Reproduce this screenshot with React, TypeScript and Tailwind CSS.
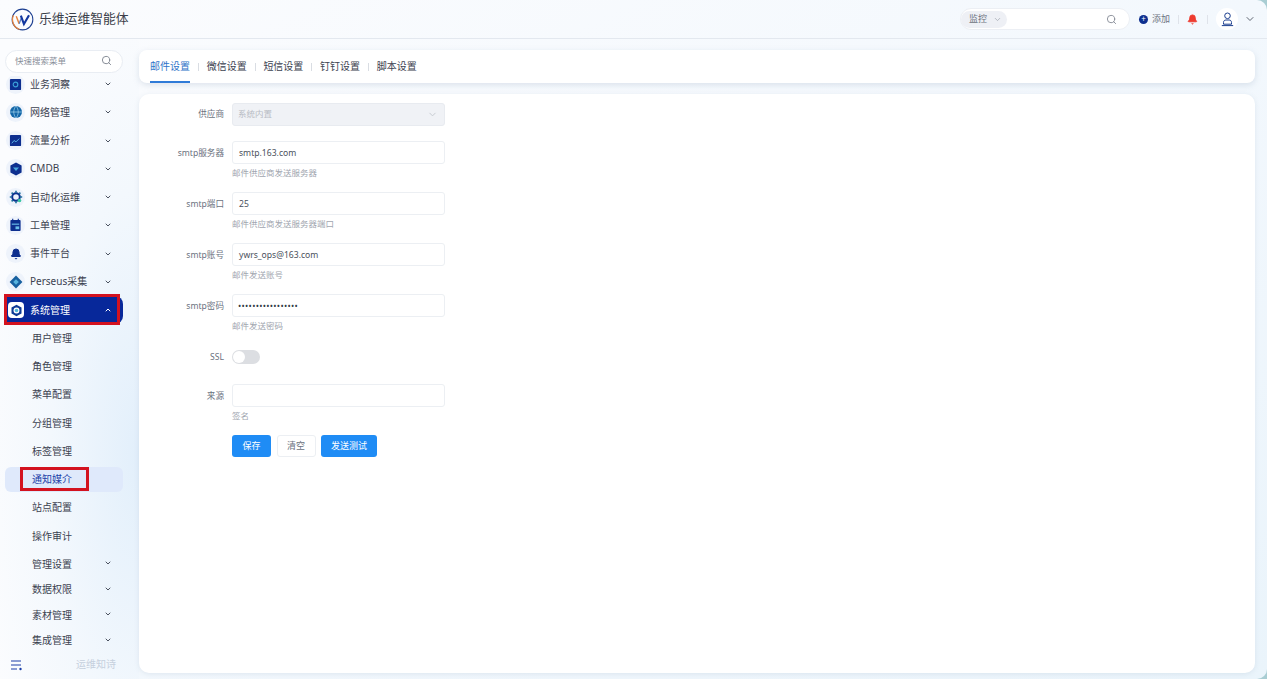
import { ChevronDown, ChevronUp, Search, Bell } from "lucide-react";

const FONT = "font-['Noto_Sans','Noto_Sans_CJK_SC',sans-serif]";

function Logo() {
  return (
    <svg width="23" height="23" viewBox="0 0 24 24" fill="none">
      <circle cx="12" cy="12" r="10.8" stroke="#1d3f91" strokeWidth="1.1" />
      <path d="M2.6 7.500A10.800 10.800 0 0 0 9 22.300" stroke="#e8823a" strokeWidth="1.300" />
      <path d="M5.500 8.500L8.500 16.500" stroke="#e8823a" strokeWidth="1.500" />
      <path d="M8.500 16.500L11 10" stroke="#5b80c4" strokeWidth="1.300" />
      <path d="M10.300 8L13.500 16.800L18.800 7.500" stroke="#12379f" strokeWidth="2.200" />
    </svg>
  );
}

function MenuIcon({ name }: { name: string }) {
  const navy = "#0d2f8f";
  if (name === "insight" || name === "flow")
    return (
      <svg width="13" height="13" viewBox="0 0 14 14">
        <rect x="1" y="1" width="12" height="12" rx="1" fill={navy} />
        {name === "insight" ? (
          <circle cx="7" cy="7" r="2.500" fill="none" stroke="#3aa0d8" strokeWidth="1.200" />
        ) : (
          <path d="M3 10l2.500-3 2 1.500L11 5" fill="none" stroke="#5ab4e6" strokeWidth="1" />
        )}
      </svg>
    );
  if (name === "net")
    return (
      <svg width="14" height="14" viewBox="0 0 14 14" fill="none">
        <circle cx="7" cy="7" r="6" fill="#1467a8" />
        <path d="M1 7h12M7 1c-3 3.500-3 8.500 0 12M7 1c3 3.500 3 8.500 0 12" stroke="#a5d4ee" strokeWidth=".7" />
      </svg>
    );
  if (name === "cmdb")
    return (
      <svg width="14" height="14" viewBox="0 0 14 14">
        <path d="M7 .6l5.600 3v6.800L7 13.400l-5.600-3V3.600z" fill={navy} />
        <path d="M4 5.500h6L7 9z" fill="#4aa8dc" />
      </svg>
    );
  if (name === "auto")
    return (
      <svg width="14" height="14" viewBox="0 0 14 14" fill="none">
        <circle cx="7" cy="7" r="3.800" stroke={navy} strokeWidth="2" />
        <path d="M7 .8v2M7 11.200v2M.8 7h2M11.200 7h2M2.600 2.600l1.400 1.400M10 10l1.400 1.400M2.600 11.400L4 10M10 4l1.400-1.400" stroke="#1b6f9c" strokeWidth="1.600" />
        <circle cx="10.500" cy="10.500" r="1.800" fill="#38c9a0" />
      </svg>
    );
  if (name === "ticket")
    return (
      <svg width="13" height="14" viewBox="0 0 14 15">
        <rect x="1.500" y="2" width="11" height="12" rx="1" fill={navy} />
        <path d="M4 .8v2.500M10 .8v2.500" stroke={navy} strokeWidth="1.200" />
        <rect x="3" y="6" width="8" height="1.200" fill="#6cc0ea" />
        <rect x="7" y="9" width="4" height="3" fill="#6cc0ea" />
      </svg>
    );
  if (name === "event") return <Bell size={12} fill={navy} stroke={navy} />;
  return (
    <svg width="14" height="14" viewBox="0 0 14 14">
      <path d="M7 .6L13.400 7 7 13.400.6 7z" fill="#17609f" />
      <path d="M7 4.200L9.800 7 7 9.800 4.200 7z" fill="#57b3de" />
    </svg>
  );
}

function TopItem({ name, label }: { name: string; label: string }) {
  return (
    <div className="flex h-[28.250px] shrink-0 items-center pl-[6px] pr-[27px]">
      <span className="flex h-[19px] w-[19px] items-center justify-center rounded-full bg-[#eef3fb]">
        <MenuIcon name={name} />
      </span>
      <span className="ml-[5px] flex-1 text-[10px] text-[#3c4250]">{label}</span>
      <ChevronDown size={8} strokeWidth={3} className="text-[#4b5260]" />
    </div>
  );
}

function SubItem({ label, arrow = false, tall = true }: { label: string; arrow?: boolean; tall?: boolean }) {
  return (
    <div className={`flex shrink-0 items-center pl-[32px] pr-[27px] ${tall ? "h-[28.250px]" : "h-[25.500px]"}`}>
      <span className="flex-1 text-[10px] text-[#3c4250]">{label}</span>
      {arrow && <ChevronDown size={8} strokeWidth={3} className="-mt-[2px] text-[#4b5260]" />}
    </div>
  );
}

function Sidebar() {
  return (
    <aside className="flex h-full w-[139px] shrink-0 flex-col bg-[radial-gradient(ellipse_at_100%_65%,#e2effb_0%,#f3f8fd_45%,#fbfcfe_80%)]">
      <div className="ml-[5px] mt-[11px] flex h-[23px] w-[118px] items-center justify-between rounded-full border border-[#e9edf3] bg-white pl-[9px] pr-[10px]">
        <span className="text-[8.500px] text-[#888e99]">快速搜索菜单</span>
        <Search size={11} className="-mt-[2px] text-[#7d838e]" />
      </div>
      <div className="mt-[3px] h-[576px] overflow-hidden">
        <div className="-mt-[6px] flex flex-col">
          <TopItem name="insight" label="业务洞察" />
          <TopItem name="net" label="网络管理" />
          <TopItem name="flow" label="流量分析" />
          <TopItem name="cmdb" label="CMDB" />
          <TopItem name="auto" label="自动化运维" />
          <TopItem name="ticket" label="工单管理" />
          <TopItem name="event" label="事件平台" />
          <TopItem name="perseus" label="Perseus采集" />
          <div className="relative ml-[5px] flex h-[28.250px] w-[118px] shrink-0 items-center rounded-r-[8px] bg-[#07289a] pl-[3px] pr-[11px]">
            <span className="flex h-[16px] w-[16px] items-center justify-center rounded-[4px] bg-white">
              <svg width="13" height="13" viewBox="0 0 14 14">
                <path d="M7 .8l5.400 3.100v6.200L7 13.200l-5.400-3.100V3.900z" fill="#0d3a96" />
                <circle cx="7" cy="7" r="3.200" fill="#fff" />
                <circle cx="7" cy="7" r="1.900" fill="#4fb4d8" />
              </svg>
            </span>
            <span className="ml-[6px] flex-1 text-[10px] text-white">系统管理</span>
            <ChevronUp size={8} strokeWidth={3} className="text-white" />
            <span className="absolute -top-[2.500px] -left-[1px] h-[31px] w-[116px] border-[3px] border-[#d3121f]" />
          </div>
          <SubItem label="用户管理" />
          <SubItem label="角色管理" />
          <SubItem label="菜单配置" />
          <SubItem label="分组管理" />
          <SubItem label="标签管理" />
          <div className="relative my-[1.620px] ml-[5px] flex h-[25px] w-[118px] shrink-0 items-center self-start rounded-[6px] bg-[#dfe9fb] pl-[27px]">
            <span className="text-[10px] text-[#1c3fa8]">通知媒介</span>
            <span className="absolute left-[15px] top-0 h-[24px] w-[69px] border-[3px] border-[#d3121f]" />
          </div>
          <SubItem label="站点配置" />
          <SubItem label="操作审计" />
          <div className="mt-[1.400px]">
            <SubItem label="管理设置" arrow tall={false} />
          </div>
          <SubItem label="数据权限" arrow tall={false} />
          <SubItem label="素材管理" arrow tall={false} />
          <SubItem label="集成管理" arrow tall={false} />
        </div>
      </div>
      <div className="flex flex-1 items-center justify-between pb-[2px] pl-[10px] pr-[23px]">
        <svg width="13" height="12" viewBox="0 0 13 12" fill="none">
          <path d="M1 2h10M1 6h10M1 10h6" stroke="#1c3fa8" strokeWidth="1.200" />
          <circle cx="10.500" cy="10" r="1.200" fill="#1c3fa8" />
        </svg>
        <span className="text-[10px] text-[#c6d0dd]">运维知诗</span>
      </div>
    </aside>
  );
}

function Header() {
  return (
    <header className="flex h-[39px] shrink-0 items-center border-b border-[#e3e8ef] pl-[11px] pr-[11px]">
      <Logo />
      <span className="ml-[5px] flex-1 text-[12.800px] text-[#3a3f4a]">乐维运维智能体</span>
      <div className="flex h-[22px] w-[170px] items-center rounded-full border border-[#eceff4] bg-white pr-[12px]">
        <span className="flex h-[17px] w-[46px] items-center gap-[6px] rounded-full bg-[#eef0f5] pl-[8px] text-[9px] text-[#6d7380]">
          监控
          <ChevronDown size={9} className="text-[#a3a8b2]" />
        </span>
        <span className="flex-1" />
        <Search size={11} className="text-[#858b96]" />
      </div>
      <span className="ml-[9px] flex h-[9px] w-[9px] items-center justify-center rounded-full bg-[#0d2f8f] text-[8px] leading-none text-white">+</span>
      <span className="ml-[4px] text-[9px] text-[#6d7380]">添加</span>
      <span className="mx-[8px] h-[9px] w-px bg-[#dfe3ea]" />
      <Bell size={11} fill="#ee3b2f" stroke="#ee3b2f" />
      <span className="mx-[9px] h-[9px] w-px bg-[#dfe3ea]" />
      <span className="-ml-[1px] flex h-[22px] w-[22px] items-center justify-center rounded-full bg-white">
        <svg width="13" height="15" viewBox="0 0 13 15" fill="none" stroke="#1c3f8f" strokeWidth="1">
          <circle cx="6.500" cy="3.800" r="2.800" />
          <path d="M2.500 10.500c0-1.500 1-2.500 2.400-2.500h3.200c1.400 0 2.400 1 2.400 2.500v1.700h-8z" />
          <path d="M.8 13.600h11.400" />
        </svg>
      </span>
      <ChevronDown size={12} className="ml-[6px] text-[#5f6672]" />
    </header>
  );
}

function Tabs() {
  const tabs = ["邮件设置", "微信设置", "短信设置", "钉钉设置", "脚本设置"];
  return (
    <div className="flex h-[33px] items-center rounded-[8px] bg-white pl-[11px] shadow-[0_2px_6px_rgba(120,140,170,0.22)]">
      {tabs.map((t, i) => (
        <div key={t} className="flex h-full items-center">
          {i > 0 && <span className="mx-[7.850px] h-[8px] w-px bg-[#d9dde3]" />}
          <span
            className={`flex h-full items-center text-[10px] ${
              i === 0 ? "border-b-2 border-[#2f7bd8] pt-[2px] text-[#2f74c8]" : "text-[#3c4250]"
            }`}
          >
            {t}
          </span>
        </div>
      ))}
    </div>
  );
}

function Field({
  label,
  value,
  hint,
  dots = false,
}: {
  label: string;
  value: string;
  hint: string;
  dots?: boolean;
}) {
  return (
    <div className="flex h-[51px] items-start">
      <label className="flex h-[23px] w-[85px] items-center justify-end pt-[1px] text-[8.600px] text-[#6b7280]">{label}</label>
      <div className="ml-[8px] w-[213px]">
        <div
          className={`flex h-[23px] items-center rounded-[3px] border border-[#eceff3] bg-white pt-[1px] text-[8.600px] ${
            dots ? "pl-[5px] tracking-[0.300px] text-[#333a46]" : "pl-[6px] text-[#4a505c]"
          }`}
        >
          {value}
        </div>
        <p className="mt-[2px] text-[8.500px] leading-[13px] text-[#a1a6af]">{hint}</p>
      </div>
    </div>
  );
}

function MailForm() {
  return (
    <div className="min-h-0 flex-1 rounded-[10px] bg-white pt-[9px] shadow-[0_1px_5px_rgba(120,140,170,0.16)]">
      <div className="flex h-[38px] items-start">
        <label className="flex h-[23px] w-[85px] items-center justify-end text-[8.600px] text-[#6b7280]">供应商</label>
        <div className="ml-[8px] flex h-[23px] w-[213px] items-center justify-between rounded-[3px] border border-[#e8ebf0] bg-[#f0f2f6] pl-[5px] pr-[6px] text-[8.500px] text-[#b8bcc4]">
          系统内置
          <ChevronDown size={11} className="text-[#c4c8cf]" />
        </div>
      </div>
      <Field label="smtp服务器" value="smtp.163.com" hint="邮件供应商发送服务器" />
      <Field label="smtp端口" value="25" hint="邮件供应商发送服务器端口" />
      <Field label="smtp账号" value="ywrs_ops@163.com" hint="邮件发送账号" />
      <Field label="smtp密码" value="•••••••••••••••••" hint="邮件发送密码" dots />
      <div className="flex h-[39px] items-start pt-[5px]">
        <label className="flex h-[14px] w-[85px] items-center justify-end text-[8.600px] text-[#6b7280]">SSL</label>
        <span className="ml-[8px] flex h-[14px] w-[28px] items-center rounded-full bg-[#dcdee2] pl-[1px]">
          <span className="h-[12px] w-[12px] rounded-full bg-white" />
        </span>
      </div>
      <Field label="来源" value="" hint="签名" />
      <div className="ml-[93px] flex gap-[5.500px]">
        <button className="h-[22px] w-[39px] rounded-[3px] bg-[#1f8cf5] text-[9px] text-white">保存</button>
        <button className="h-[22px] w-[39px] rounded-[3px] border border-[#eceff3] bg-white text-[9px] text-[#6b7280]">清空</button>
        <button className="h-[22px] w-[56px] rounded-[3px] bg-[#1f8cf5] text-[9px] text-white">发送测试</button>
      </div>
    </div>
  );
}

export default function App() {
  return (
    <div className={`h-[679px] w-[1267px] overflow-hidden bg-[#a9cdd3] ${FONT}`}>
      <div className="flex h-full w-full flex-col overflow-hidden rounded-r-[10px] bg-gradient-to-br from-[#fbfcfe] via-[#f3f8fd] to-[#eaf4fb]">
        <Header />
        <div className="flex min-h-0 flex-1">
          <Sidebar />
          <main className="flex min-w-0 flex-1 flex-col gap-[11px] pb-[6px] pr-[12px] pt-[11px]">
            <Tabs />
            <MailForm />
          </main>
        </div>
      </div>
    </div>
  );
}
